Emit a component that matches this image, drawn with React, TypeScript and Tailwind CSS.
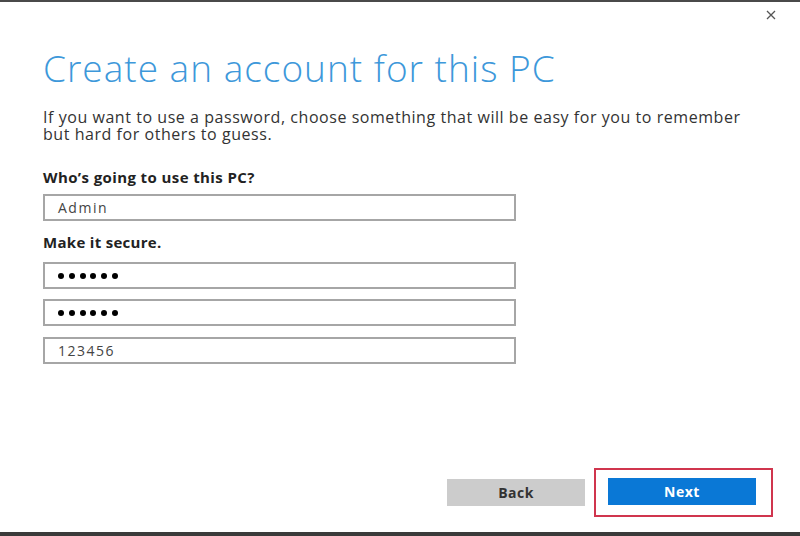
export default function App() {
  const font = { fontFamily: '"Open Sans", "Noto Sans", sans-serif' };
  return (
    <div className="flex h-[536px] w-[800px] flex-col bg-white" style={font}>
      <div className="h-[2px] bg-[#4a4a4a]" />
      <div className="flex flex-1 flex-col pl-[43px] pr-[22px]">
        <div className="flex h-[26px] justify-end pt-[8px] pr-[2px]">
          <svg width="10" height="10" viewBox="0 0 10 10" className="text-[#555]">
            <path d="M1 1 L9 9 M9 1 L1 9" stroke="currentColor" strokeWidth="1.3" />
          </svg>
        </div>
        <h1 className="mt-[18px] text-[37px] leading-[44px] font-light tracking-[1px] text-[#3d98da]">
          Create an account for this PC
        </h1>
        <p className="mt-[19px] w-[712px] text-[16px] leading-[17px] tracking-[0.55px] text-[#333]">
          If you want to use a password, choose something that will be easy for you to remember but hard for others to guess.
        </p>
        <div className="mt-[26px] text-[15px] leading-[17px] font-bold tracking-[0.4px] text-[#222]">
          Who’s going to use this PC?
        </div>
        <Field className="mt-[8px]">Admin</Field>
        <div className="mt-[13px] text-[15px] leading-[17px] font-bold tracking-[0.3px] text-[#222]">
          Make it secure.
        </div>
        <Field className="mt-[11px]" dots />
        <Field className="mt-[10px]" dots />
        <Field className="mt-[11px]">123456</Field>
        <div className="mt-auto mb-[15px] flex items-center justify-end gap-[9px] pr-[5px]">
          <button className="h-[27px] w-[138px] bg-[#cccccc] text-[14px] font-bold tracking-[0.5px] text-[#333]">
            Back
          </button>
          <div className="border-2 border-[#d0354e] pt-[8px] pr-[15px] pb-[10px] pl-[12px]">
            <button className="block h-[27px] w-[148px] bg-[#0a78d6] text-[14px] font-bold tracking-[0.5px] text-white">
              Next
            </button>
          </div>
        </div>
      </div>
      <div className="h-[4px] bg-[#3a3a3a]" />
    </div>
  );
}

function Field({
  children,
  className = "",
  dots = false,
}: {
  children?: React.ReactNode;
  className?: string;
  dots?: boolean;
}) {
  return (
    <div
      className={`flex h-[27px] w-[473px] items-center border-2 border-[#a6a6a6] pl-[13px] text-[14px] tracking-[1.5px] text-[#444] ${className}`}
    >
      {dots ? (
        <div className="flex gap-[4.8px]">
          {[0, 1, 2, 3, 4, 5].map((i) => (
            <span key={i} className="block h-[6px] w-[6px] rounded-full bg-black" />
          ))}
        </div>
      ) : (
        children
      )}
    </div>
  );
}
